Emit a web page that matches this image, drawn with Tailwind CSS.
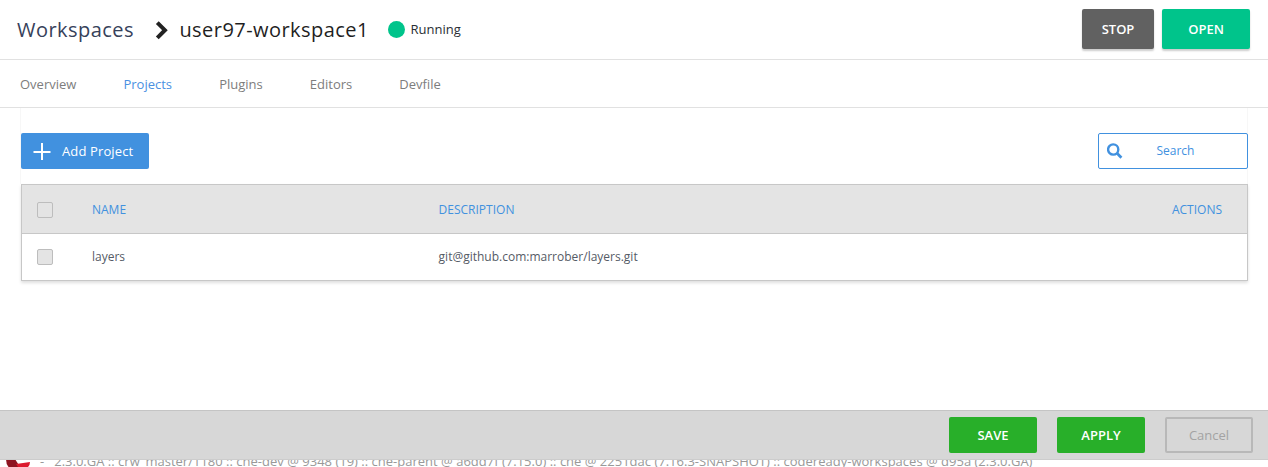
<!DOCTYPE html>
<html lang="en">
<head>
<meta charset="utf-8">
<title>Workspaces</title>
<script src="https://cdn.jsdelivr.net/npm/@tailwindcss/browser@4"></script>
</head>
<body class="h-[467px] overflow-hidden bg-white font-['Open_Sans',sans-serif] text-[13px] whitespace-nowrap">
<div class="flex h-[467px] flex-col overflow-hidden">
  <header class="flex h-[60px] shrink-0 items-center border-b border-[#e1e1e1] pr-[18px] pl-[17px]">
    <a class="w-[138px] text-[20px] leading-[30px] tracking-[.45px] text-[#36415a]">Workspaces</a>
    <svg class="h-5 w-[14px] shrink-0" viewBox="0 0 14 20" fill="none" stroke="#222" stroke-width="4"><path d="M2.3 2.6 9.9 10.2 2.3 17.8"/></svg>
    <h1 class="ml-[10.4px] w-[208.6px] text-[20px] leading-[30px] tracking-[.45px] text-[#1f1f1f]">user97-workspace1</h1>
    <span class="size-[17px] rounded-full bg-[#00c48b]"></span>
    <span class="ml-[5.5px] text-[#292e34]">Running</span>
    <div class="ml-auto flex gap-2 pb-px font-semibold text-white">
      <button class="h-10 w-[72px] rounded-[2px] bg-[#616161] pt-[2px] shadow-[0_2px_2px_rgba(0,0,0,0.2)]">STOP</button>
      <button class="h-10 w-[88px] rounded-[2px] bg-[#00c48b] pt-[2px] shadow-[0_2px_2px_rgba(0,0,0,0.2)]">OPEN</button>
    </div>
  </header>
  <nav class="flex h-12 shrink-0 items-center gap-[47.1px] border-b border-[#e1e1e1] pt-[3px] pl-5 text-[#7d7d7d]">
    <a>Overview</a><a class="text-[#4a90e2]">Projects</a><a>Plugins</a><a>Editors</a><a>Devfile</a>
  </nav>
  <main class="mx-5 h-[302px] shrink-0">
    <div class="flex h-[76px] items-start justify-between border-x border-[#f7f7f7] pt-[25px]">
      <button class="flex h-9 w-32 items-center rounded-[2px] bg-[#4191df] pl-3 text-white">
        <svg class="size-[18px]" viewBox="0 0 18 18" stroke="#fff" stroke-width="2"><path d="M.5 10h17M9 1v17"/></svg>
        <span class="ml-[11px] pt-[2px] tracking-[.13px]">Add Project</span>
      </button>
      <div class="-mr-px flex h-9 w-[150px] items-center rounded-[2px] border border-[#4191df] pl-2 text-[12px] text-[#4191df]">
        <svg class="h-4 w-4" viewBox="0 0 16 16" fill="none" stroke="#4191df" stroke-width="2.4"><circle cx="6.2" cy="6.5" r="5.1"/><path d="m9.8 10.1 4.6 4.6" stroke-width="2.8"/></svg>
        <span class="ml-[33.4px] pb-px">Search</span>
      </div>
    </div>
    <section class="ml-px w-[1227px] border border-[#c7c7c7] text-[12px] shadow-[0_2px_3px_rgba(0,0,0,0.13)]">
      <div class="flex h-[49px] items-center border-b border-[#c7c7c7] bg-[#e4e4e4] pt-[2px] pl-[15px] text-[#4191df]">
        <span class="size-4 rounded-[2px] border border-[#bdbdbd]"></span>
        <span class="ml-[39px] w-[346.6px]">NAME</span><span>DESCRIPTION</span><span class="mr-[25px] ml-auto">ACTIONS</span>
      </div>
      <div class="flex h-[46px] items-center pl-[15px] text-[#555b66]">
        <span class="size-4 rounded-[2px] border border-[#bdbdbd] bg-[#e4e4e4]"></span>
        <span class="ml-[39px] w-[346.6px] pb-px">layers</span><span class="pb-px">git@github.com:marrober/layers.git</span>
      </div>
    </section>
  </main>
  <div class="z-10 flex h-[50px] shrink-0 items-start justify-end gap-5 border-t border-b border-t-[#c4c4c4] border-b-[#cccccc] bg-[#d7d7d7] pt-[6px] pr-[15px]">
    <button class="h-9 w-[88px] rounded-[2px] bg-[#28af29] pt-[2px] font-semibold text-white">SAVE</button>
    <button class="h-9 w-[88px] rounded-[2px] bg-[#28af29] pt-[2px] font-semibold text-white">APPLY</button>
    <button class="h-9 w-[88px] rounded-[2px] border-2 border-[#b8b8b8] pt-[2px] text-[#a3a3a3]">Cancel</button>
  </div>
  <footer class="-mt-[8px] flex h-[15px] shrink-0 pl-[6px] leading-[18px] text-[#999]">
    <svg class="h-[15px] w-[26px]" viewBox="0 0 26 15"><path d="M0 7h9l5 8H2.500Q0 12 0 7z" fill="#8e1421"/><path d="m10 12 14-2q0 3-2 5H12z" fill="#dc1a2e"/></svg>
    <span class="ml-[8px]">-</span><span class="ml-[10px] tracking-[.008px]">2.3.0.GA :: crw_master/1180 :: che-dev @ 9348 (19) :: che-parent @ a6dd7f (7.15.0) :: che @ 2251dac (7.16.3-SNAPSHOT) :: codeready-workspaces @ d95a (2.3.0.GA)</span>
  </footer>
</div>
</body>
</html>
